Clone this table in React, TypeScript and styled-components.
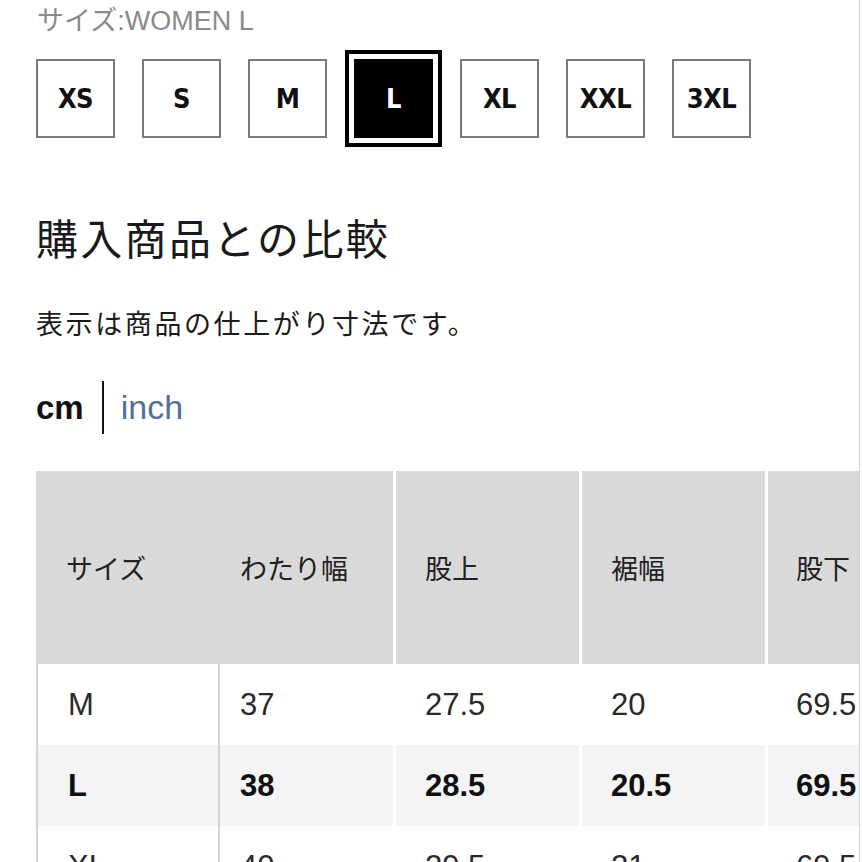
import React from 'react'
import styled, { createGlobalStyle } from 'styled-components'

const GlobalStyle = createGlobalStyle`
  html, body {
    margin: 0;
    padding: 0;
    background: #fff;
  }
  body {
    font-family: "Liberation Sans", "Noto Sans CJK JP", sans-serif;
    color: #1a1a1a;
  }
`

const SIZES = ['XS', 'S', 'M', 'L', 'XL', 'XXL', '3XL']

const COLUMNS = [
  { label: 'サイズ', width: 184, pad: 30 },
  { label: 'わたり幅', width: 176, pad: 20 },
  { label: '股上', width: 186, pad: 29 },
  { label: '裾幅', width: 186, pad: 29 },
  { label: '股下', width: 186, pad: 28 },
]

const ROWS = [
  { size: 'M', values: ['37', '27.5', '20', '69.5'] },
  { size: 'L', values: ['38', '28.5', '20.5', '69.5'], current: true },
  { size: 'XL', values: ['40', '29.5', '21', '69.5'] },
]

const Page = styled.div`
  width: 860px;
  height: 862px;
  overflow: hidden;
  box-sizing: border-box;
  border-right: 1px solid #d2d2d2;
  padding-left: 36px;
`

const SizeLabel = styled.div`
  margin-top: 6px;
  padding-left: 1px;
  font-size: 27px;
  line-height: 30px;
  color: #8a8a8a;
`

const SizeRow = styled.div`
  display: flex;
  gap: 27px;
  margin-top: 23px;
`

const SizeButton = styled.div<{ $active?: boolean }>`
  width: 79px;
  height: 79px;
  box-sizing: border-box;
  display: flex;
  align-items: center;
  justify-content: center;
  border: 2px solid ${({ $active }) => ($active ? '#000' : '#7a7a7a')};
  background: ${({ $active }) => ($active ? '#000' : '#fff')};
  color: ${({ $active }) => ($active ? '#fff' : '#111')};
  outline: ${({ $active }) => ($active ? '4px solid #000' : 'none')};
  outline-offset: 5px;
  font-family: "DejaVu Sans Condensed", "Roboto Condensed", "Liberation Sans Narrow", Roboto, sans-serif;
  font-stretch: condensed;
  font-weight: 700;
  font-size: 27px;
  letter-spacing: -0.5px;
`

const Title = styled.h2`
  margin: 75px 0 0;
  font-family: "Noto Sans CJK JP", sans-serif;
  font-weight: 400;
  font-size: 42px;
  line-height: 48px;
  letter-spacing: 2.3px;
  color: #1a1a1a;
`

const Note = styled.p`
  margin: 44px 0 0;
  font-family: "Noto Sans CJK JP", sans-serif;
  font-size: 27px;
  line-height: 36px;
  letter-spacing: 2.6px;
  color: #1a1a1a;
`

const UnitSwitch = styled.div`
  display: flex;
  align-items: center;
  margin-top: 40px;
  height: 53px;
`

const Unit = styled.span<{ $active?: boolean }>`
  font-size: ${({ $active }) => ($active ? 33 : 34)}px;
  font-weight: ${({ $active }) => ($active ? 700 : 400)};
  color: ${({ $active }) => ($active ? '#111' : '#4f6f9e')};
`

const Divider = styled.span`
  width: 2px;
  align-self: stretch;
  background: #111;
  margin: 0 17px 0 18px;
`

const Table = styled.table`
  margin-top: 37px;
  border-collapse: separate;
  border-spacing: 0;
  table-layout: fixed;
  width: 918px;
`

const HeadCell = styled.th<{ $pad: number; $first?: boolean }>`
  height: 193px;
  box-sizing: border-box;
  padding: 0 0 0 ${({ $pad }) => $pad}px;
  text-align: left;
  vertical-align: middle;
  background: #d9d9d9;
  border-right: 3px solid ${({ $first }) => ($first ? '#d9d9d9' : '#fff')};
  font-family: "Noto Sans CJK JP", sans-serif;
  font-weight: 400;
  font-size: 27px;
  color: #222;
`

const BodyRow = styled.tr<{ $current?: boolean }>`
  height: 81px;
  background: ${({ $current }) => ($current ? '#f4f4f4' : '#fff')};
`

const BodyCell = styled.td<{ $pad: number; $current?: boolean; $first?: boolean }>`
  padding: 0 0 0 ${({ $pad }) => $pad}px;
  vertical-align: middle;
  font-size: 31px;
  font-weight: ${({ $current }) => ($current ? 700 : 400)};
  color: ${({ $current }) => ($current ? '#111' : '#2a2a2a')};
  border-left: ${({ $first }) => ($first ? '2px solid #d4d4d4' : 'none')};
  border-right: ${({ $first }) => ($first ? '2px solid #d4d4d4' : '3px solid #fff')};
`

export default function App() {
  return (
    <Page>
      <GlobalStyle />
      <SizeLabel>サイズ:WOMEN L</SizeLabel>
      <SizeRow>
        {SIZES.map((s) => (
          <SizeButton key={s} $active={s === 'L'}>
            {s}
          </SizeButton>
        ))}
      </SizeRow>
      <Title>購入商品との比較</Title>
      <Note>表示は商品の仕上がり寸法です。</Note>
      <UnitSwitch>
        <Unit $active>cm</Unit>
        <Divider />
        <Unit>inch</Unit>
      </UnitSwitch>
      <Table>
        <colgroup>
          {COLUMNS.map((c) => (
            <col key={c.label} style={{ width: c.width }} />
          ))}
        </colgroup>
        <thead>
          <tr>
            {COLUMNS.map((c, i) => (
              <HeadCell key={c.label} $pad={c.pad} $first={i === 0}>
                {c.label}
              </HeadCell>
            ))}
          </tr>
        </thead>
        <tbody>
          {ROWS.map((r) => (
            <BodyRow key={r.size} $current={r.current}>
              <BodyCell $pad={COLUMNS[0].pad} $current={r.current} $first>
                {r.size}
              </BodyCell>
              {r.values.map((v, i) => (
                <BodyCell key={i} $pad={COLUMNS[i + 1].pad} $current={r.current}>
                  {v}
                </BodyCell>
              ))}
            </BodyRow>
          ))}
        </tbody>
      </Table>
    </Page>
  )
}
